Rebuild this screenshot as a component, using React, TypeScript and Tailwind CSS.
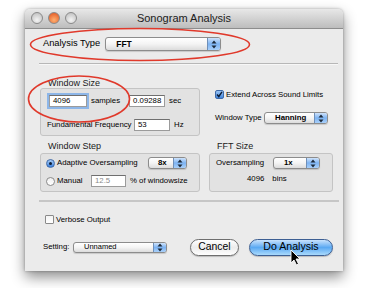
import React from 'react';

const font = { fontFamily: '"Liberation Sans", Arial, sans-serif' };

function Arrows() {
  return (
    <svg width="6" height="9" viewBox="0 0 6 9">
      <path d="M3 0.5 L5.5 3.5 L0.5 3.5 Z" fill="#1d2a3a" />
      <path d="M3 8.5 L5.5 5.5 L0.5 5.5 Z" fill="#1d2a3a" />
    </svg>
  );
}

function Popup({ w, h = 12, text, pad = 'pl-[12px]', size = 'text-[7.8px]' }: { w: number; h?: number; text: string; pad?: string; size?: string }) {
  return (
    <div
      className="flex items-stretch rounded-[3px] border border-[#8c8c8c] bg-gradient-to-b from-white via-[#f4f4f4] to-[#dcdcdc] shadow-[0_1px_1px_rgba(0,0,0,0.15)] overflow-hidden"
      style={{ width: w, height: h }}
    >
      <div className={`flex-1 flex items-center ${pad} ${size} text-black font-bold leading-none`}>{text}</div>
      <div className="w-[13px] flex items-center justify-center bg-gradient-to-b from-[#cfe3fb] via-[#7db3f2] to-[#a9d0fa] border-l border-[#6f8fb8]">
        <Arrows />
      </div>
    </div>
  );
}

function Field({ w, text, focus, dim }: { w: number; text: string; focus?: boolean; dim?: boolean }) {
  return (
    <div
      className={`h-[12px] bg-white border border-[#9b9b9b] border-t-[#6f6f6f] flex items-center pl-[3px] text-[7.8px] leading-none ${dim ? 'text-[#8a8a8a]' : 'text-black'} ${focus ? 'shadow-[0_0_0_2px_#8db6e8]' : ''}`}
      style={{ width: w }}
    >
      {text}
    </div>
  );
}

function Check({ on }: { on?: boolean }) {
  return on ? (
    <div className="w-[9px] h-[9px] rounded-[2px] border border-[#3f6aa8] bg-gradient-to-b from-[#9cc6f5] to-[#3f84dc] flex items-center justify-center">
      <svg width="7" height="7" viewBox="0 0 7 7">
        <path d="M1 3.5 L2.8 5.5 L6 0.8" stroke="#0d1c33" strokeWidth="1.4" fill="none" />
      </svg>
    </div>
  ) : (
    <div className="w-[9px] h-[9px] rounded-[1px] border border-[#8a8a8a] bg-gradient-to-b from-[#f4f4f4] to-white" />
  );
}

function Radio({ on }: { on?: boolean }) {
  return on ? (
    <div className="w-[9px] h-[9px] rounded-full border border-[#3f6aa8] bg-gradient-to-b from-[#a8cdf7] to-[#3a7fdb] flex items-center justify-center">
      <div className="w-[3px] h-[3px] rounded-full bg-[#0d1c33]" />
    </div>
  ) : (
    <div className="w-[9px] h-[9px] rounded-full border border-[#8a8a8a] bg-gradient-to-b from-[#f0f0f0] to-white" />
  );
}

function Light({ c1, c2 }: { c1: string; c2: string }) {
  return (
    <div
      className="w-[12px] h-[12px] rounded-full border border-[#8a8a8a]"
      style={{ background: `radial-gradient(circle at 50% 70%, ${c1}, ${c2})` }}
    />
  );
}

export default function App() {
  return (
    <div className="relative w-[367px] h-[288px] bg-white pt-[9px] pl-[25px] overflow-hidden" style={font}>
      <div className="relative w-[318px] h-[262px] bg-[#ebebeb] rounded-t-[5px] shadow-[0_6px_14px_rgba(0,0,0,0.45),0_0_3px_rgba(0,0,0,0.3)] flex flex-col">
        {/* title bar */}
        <div className="relative h-[20px] rounded-t-[5px] bg-gradient-to-b from-[#e8e8e8] to-[#bdbdbd] border-b border-[#8d8d8d] flex items-center justify-center">
          <div className="absolute left-[6px] top-[3px] flex gap-[5px]">
            <Light c1="#f4f4f4" c2="#b9b9b9" />
            <Light c1="#ffb070" c2="#e0501c" />
            <Light c1="#f4f4f4" c2="#b9b9b9" />
          </div>
          <span className="text-[11px] text-[#202020]">Sonogram Analysis</span>
        </div>

        {/* analysis type */}
        <div className="mt-[8px] ml-[18px] flex items-center gap-[5px] h-[14px]">
          <span className="text-[9.3px] text-black">Analysis Type</span>
          <Popup w={116} h={14} text="FFT" pad="pl-[10px]" size="text-[8.5px]" />
        </div>

        <div className="mt-[12px] ml-[14px] w-[299px] border-t border-[#b7b7b7] border-b border-b-[#f7f7f7]" />

        {/* upper groups */}
        <div className="flex mt-[13px] ml-[15px]">
          <div className="w-[160px]">
            <div className="ml-[8px] text-[9px] leading-[10px] text-[#1a1a1a]">Window Size</div>
            <div className="mt-[0px] h-[48px] rounded-[3px] border border-[#c4c4c4] bg-[#e2e2e2] pt-[6px] px-[8px]">
              <div className="flex items-center h-[12px]">
                <Field w={38} text="4096" focus />
                <span className="ml-[4px] text-[7.8px]">samples</span>
                <div className="ml-[9px]"><Field w={36} text="0.09288" /></div>
                <span className="ml-[4px] text-[7.8px]">sec</span>
              </div>
              <div className="flex items-center h-[13px] mt-[11px] -ml-[2px]">
                <span className="text-[7.8px] w-[87px]">Fundamental Frequency</span>
                <Field w={36} text="53" />
                <span className="ml-[4px] text-[7.8px]">Hz</span>
              </div>
            </div>
          </div>
          <div className="ml-[15px] pt-[12px]">
            <div className="flex items-center gap-[2px] h-[9px]">
              <Check on />
              <span className="text-[7.8px]">Extend Across Sound Limits</span>
            </div>
            <div className="flex items-center mt-[13px] h-[12px]">
              <span className="text-[7.8px] w-[49px]">Window Type</span>
              <Popup w={64} text="Hanning" pad="pl-[10px]" />
            </div>
          </div>
        </div>

        {/* lower groups */}
        <div className="flex mt-[5px] ml-[15px]">
          <div className="w-[160px]">
            <div className="ml-[8px] text-[9px] leading-[10px] text-[#1a1a1a]">Window Step</div>
            <div className="mt-[2px] h-[39px] rounded-[3px] border border-[#c4c4c4] bg-[#e2e2e2] pt-[3px] pl-[5px]">
              <div className="flex items-center h-[12px]">
                <Radio on />
                <span className="ml-[2px] text-[7.8px] w-[91px]">Adaptive Oversampling</span>
                <Popup w={39} text="8x" pad="pl-[9px]" />
              </div>
              <div className="flex items-center h-[12px] mt-[6px]">
                <Radio />
                <span className="ml-[2px] text-[7.8px] w-[34px]">Manual</span>
                <Field w={35} text="12.5" dim />
                <span className="ml-[4px] text-[7.8px]">% of windowsize</span>
              </div>
            </div>
          </div>
          <div className="ml-[9px] w-[124px]">
            <div className="ml-[8px] text-[9px] leading-[10px] text-[#1a1a1a]">FFT Size</div>
            <div className="mt-[2px] h-[39px] rounded-[3px] border border-[#c4c4c4] bg-[#e2e2e2] pt-[3px] pl-[6px]">
              <div className="flex items-center h-[12px]">
                <span className="text-[7.8px] w-[57px]">Oversampling</span>
                <Popup w={47} text="1x" pad="pl-[10px]" />
              </div>
              <div className="flex items-center h-[12px] mt-[4px] pl-[31px] text-[7.8px]">
                <span>4096</span>
                <span className="ml-[8px]">bins</span>
              </div>
            </div>
          </div>
        </div>

        <div className="mt-[8px] ml-[14px] w-[300px] border-t-2 border-[#c6c6c6]" />

        <div className="mt-[13px] ml-[20px] flex items-center gap-[2px] h-[9px]">
          <Check />
          <span className="text-[7.8px]">Verbose Output</span>
        </div>

        <div className="mt-[14px] ml-[18px] flex items-center h-[18px]">
          <span className="text-[7.8px] w-[30px]">Setting:</span>
          <Popup w={94} h={11} text="Unnamed" pad="pl-[10px]" size="text-[7.5px] font-normal" />
          <div className="ml-[23px] w-[49px] h-[17px] rounded-full border border-[#6e6e6e] bg-gradient-to-b from-white via-[#ececec] to-white shadow-[0_1px_1px_rgba(0,0,0,0.2)] flex items-center justify-center text-[10.4px] text-black">
            Cancel
          </div>
          <div className="ml-[10px] w-[84px] h-[17px] rounded-full border border-[#3d5f93] bg-gradient-to-b from-[#c8e2fc] via-[#5aa9f2] to-[#a9dafc] shadow-[0_1px_1px_rgba(0,0,0,0.2)] flex items-center justify-center text-[10.6px] text-black">
            Do Analysis
          </div>
        </div>
      </div>

      {/* red annotation ellipses */}
      <svg className="absolute left-0 top-0 pointer-events-none" width="367" height="288" viewBox="0 0 367 288">
        <ellipse cx="140" cy="44.5" rx="109.5" ry="16" fill="none" stroke="#e0392b" strokeWidth="1.6" />
        <ellipse cx="79" cy="99" rx="50.5" ry="23" fill="none" stroke="#e0392b" strokeWidth="1.6" />
        <path d="M291 250 L291 263 L294 260 L296.5 265 L298.5 264 L296 259 L300 259 Z" fill="#000" stroke="#fff" strokeWidth="0.9" />
      </svg>
    </div>
  );
}
